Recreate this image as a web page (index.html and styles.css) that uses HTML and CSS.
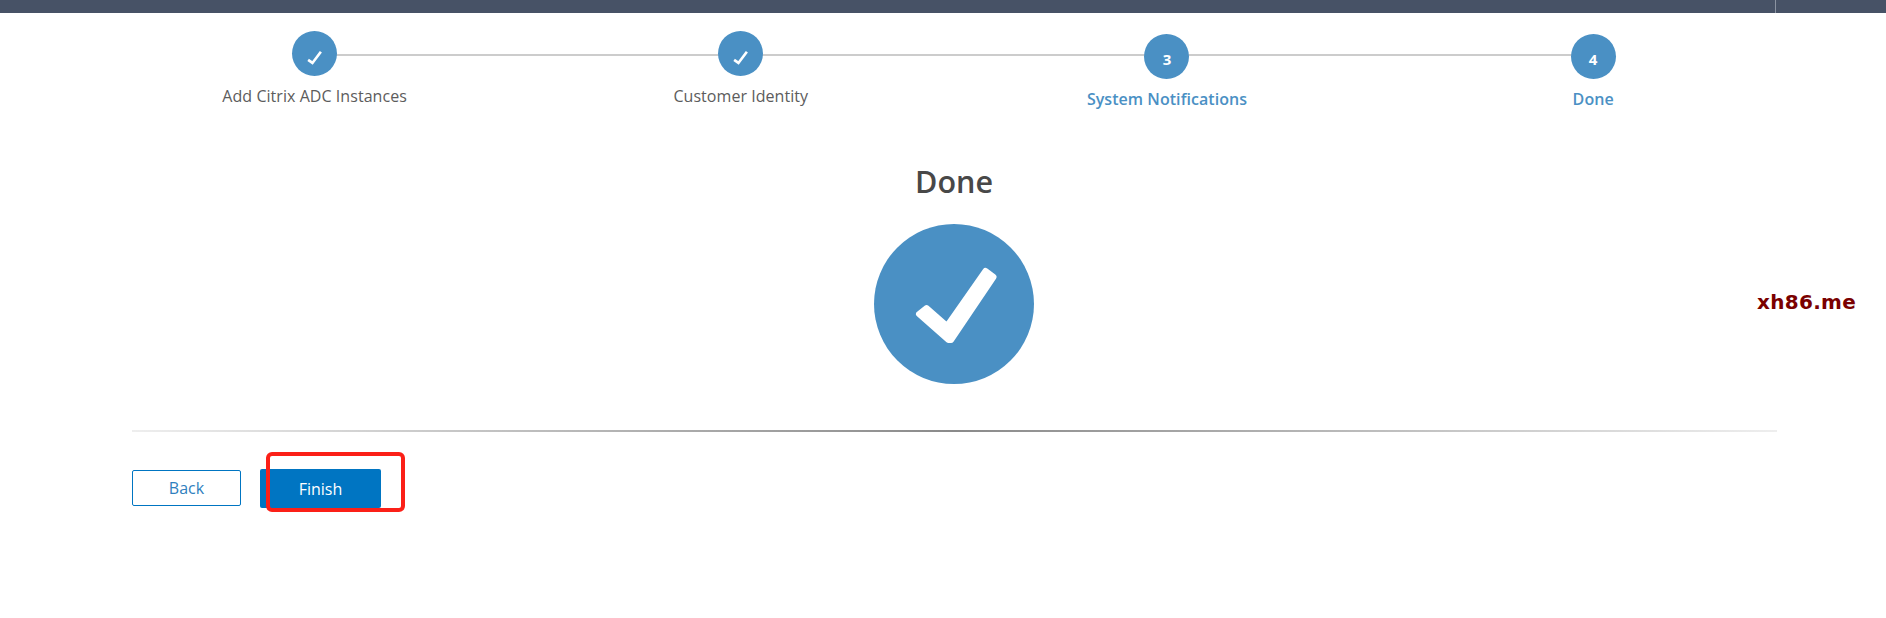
FILE: index.html
```html
<!DOCTYPE html>
<html lang="en">
<head>
<meta charset="utf-8">
<title>Done</title>
<link rel="stylesheet" href="styles.css">
</head>
<body>
<header class="topbar"><span class="topbar-divider"></span></header>
<main class="wizard">
  <ol class="stepper">
    <li class="step step-complete">
      <span class="step-badge"><svg class="step-check" viewBox="0 0 16 16"><path d="M1.2 10.5 5.8 13.8 14.8 1.8" /></svg></span>
      <span class="step-label">Add Citrix ADC Instances</span>
    </li>
    <li class="step step-complete">
      <span class="step-badge"><svg class="step-check" viewBox="0 0 16 16"><path d="M1.2 10.5 5.8 13.8 14.8 1.8" /></svg></span>
      <span class="step-label">Customer Identity</span>
    </li>
    <li class="step step-current">
      <span class="step-badge">3</span>
      <span class="step-label">System Notifications</span>
    </li>
    <li class="step step-current">
      <span class="step-badge">4</span>
      <span class="step-label">Done</span>
    </li>
  </ol>
  <section class="result">
    <h1 class="result-title">Done</h1>
    <svg class="result-icon" viewBox="0 0 160 160">
      <circle cx="80" cy="80" r="80" fill="#4a90c4"/>
      <path class="result-check" d="M45 90 52.5 84 73 102 111.5 47 119.5 53 77 116 74.5 116Z"/>
    </svg>
  </section>
  <div class="rule"></div>
  <div class="actions">
    <button class="btn btn-secondary" type="button">Back</button>
    <button class="btn btn-primary" type="button">Finish</button>
    <span class="highlight"></span>
  </div>
</main>
<span class="watermark">xh86.me</span>
</body>
</html>
```

FILE: styles.css
```css
* { box-sizing: border-box; }
html, body { margin: 0; padding: 0; }
body {
  position: relative;
  height: 618px;
  overflow: hidden;
  background: #fff;
  font-family: "Open Sans", "Liberation Sans", sans-serif;
}
.topbar {
  position: relative;
  height: 13px;
  background: #475266;
}
.topbar-divider {
  position: absolute;
  left: 1775px;
  top: 0;
  width: 1px;
  height: 13px;
  background: #8b93a1;
}
.wizard { padding: 18px 109px 0 132px; }
.stepper {
  position: relative;
  display: grid;
  grid-template-columns: repeat(4, 426.2px);
  margin: 0 0 0 -30.5px;
  padding: 0;
  list-style: none;
  height: 90px;
}
.stepper::before {
  content: "";
  position: absolute;
  left: 213px;
  width: 1279px;
  top: 23px;
  height: 2px;
  background: #ccc;
}
.step {
  position: relative;
  display: flex;
  flex-direction: column;
  align-items: center;
  gap: 10px;
}
.step-current { padding-top: 3px; color: #4a90c4; }
.step-badge {
  display: flex;
  align-items: center;
  justify-content: center;
  width: 45px;
  height: 45px;
  padding-top: 4px;
  border-radius: 50%;
  background: #4a90c4;
  color: #fff;
  font-size: 15px;
  font-weight: 700;
}
.step-complete .step-badge { padding-top: 2px; }
.step-check {
  width: 15px;
  height: 15px;
  margin-top: 6px;
  margin-right: 1px;
  fill: none;
  stroke: #fff;
  stroke-width: 2.8;
}
.step-label { font-size: 16px; line-height: 20px; letter-spacing: 0.05px; color: #5c5c5c; }
.step-current .step-label { font-weight: 600; color: #4a90c4; }
.result {
  display: flex;
  flex-direction: column;
  align-items: center;
  padding-top: 40px;
  margin-left: -1px;
}
.result-title {
  margin: 0 0 22px;
  font-size: 30.5px;
  line-height: 41px;
  font-weight: 600;
  color: #484848;
}
.result-icon { display: block; width: 160px; height: 160px; }
.result-check {
  fill: #fff;
  stroke: #fff;
  stroke-width: 6;
  stroke-linejoin: round;
}
.rule {
  height: 2px;
  width: 1645px;
  margin-top: 46px;
  background: linear-gradient(to right, #eee 0%, #8a8a8a 50%, #eee 100%);
}
.actions {
  position: relative;
  display: flex;
  align-items: flex-start;
  gap: 19px;
  margin-top: 37px;
}
.btn {
  font-family: inherit;
  font-size: 16px;
  border-radius: 2px;
  padding: 0;
}
.btn-secondary {
  width: 109px;
  height: 36px;
  margin-top: 1px;
  background: #fff;
  border: 1px solid #0075c2;
  color: #2f80be;
}
.btn-primary {
  width: 121px;
  height: 39px;
  background: #0075c2;
  border: 0;
  color: #fff;
}
.highlight {
  position: absolute;
  left: 134px;
  top: -17px;
  width: 139px;
  height: 60px;
  border: 4px solid #fb2018;
  border-radius: 6px;
}
.watermark {
  position: absolute;
  left: 1757px;
  top: 288px;
  font-family: "DejaVu Sans", sans-serif;
  font-size: 20px;
  line-height: 28px;
  font-weight: 700;
  letter-spacing: 0.3px;
  color: #7a0000;
}
```
